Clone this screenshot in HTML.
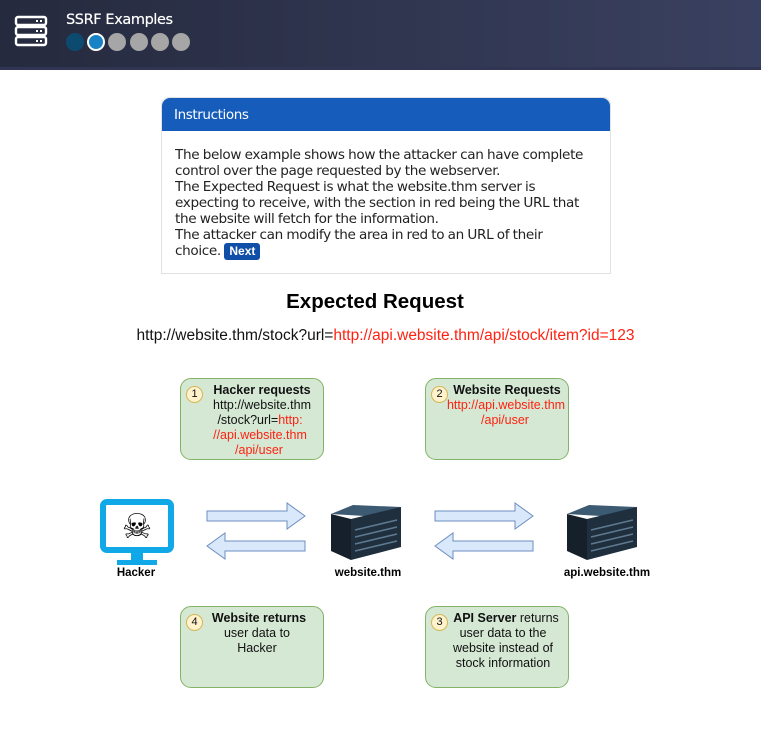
<!DOCTYPE html>
<html><head><meta charset="utf-8"><style>
*{margin:0;padding:0;box-sizing:border-box}
body{width:761px;height:740px;background:#fff;position:relative;overflow:hidden;font-family:"Liberation Sans",sans-serif}
.hdr{position:absolute;left:0;top:0;width:761px;height:70px;background:linear-gradient(90deg,#252a3e,#3a4160);border-bottom:3px solid #2f3552}
.ttl{position:absolute;left:66px;top:12px;color:#fff;font-size:14.5px;font-family:"DejaVu Sans","Liberation Sans",sans-serif;letter-spacing:-0.4px;font-weight:500;text-shadow:0 0 0.5px #fff}
.dot{position:absolute;top:33px;width:18px;height:18px;border-radius:50%;background:#a6a6a6}
.card{position:absolute;left:161px;top:97px;width:450px;height:177px;border:1px solid #e2e2e2;border-radius:8px 8px 0 0}
.ch{height:33px;background:#165dbb;border-radius:8px 8px 0 0;color:#fff;font-size:13.5px;padding:9px 12px;font-family:"DejaVu Sans",sans-serif;letter-spacing:-0.4px}
.cb{padding:16px 0 0 13px;font-size:13.6px;line-height:16px;color:#222;font-family:"DejaVu Sans",sans-serif;letter-spacing:-0.35px;word-spacing:-0.5px}
.nx{display:inline-block;background:#0f4fa8;color:#fff;font-family:"Liberation Sans",sans-serif;font-weight:bold;font-size:12px;padding:1px 5px;border-radius:3px;letter-spacing:0;word-spacing:0;line-height:15px}
.box{position:absolute;width:144px;height:82px;background:#d5e8d4;border:1px solid #82b366;border-radius:11px;font-size:12.5px;color:#111;text-align:center;line-height:15px;padding-top:4px}
.num{position:absolute;left:5px;top:7px;width:17px;height:17px;border-radius:50%;background:#fff2cc;border:1px solid #d6b656;font-size:11px;line-height:15px;text-align:center}
.r{color:#f21}
.lbl{position:absolute;font-size:11.5px;font-weight:bold;color:#000;text-align:center}
</style></head><body>
<div class="hdr">
<svg style="position:absolute;left:14px;top:15px" width="34" height="32" viewBox="0 0 34 32" fill="none" stroke="#fff" stroke-width="2.4"><rect x="2" y="2" width="30" height="8" rx="2"/><rect x="2" y="12" width="30" height="8" rx="2"/><rect x="2" y="22" width="30" height="8" rx="2"/><g stroke-width="2"><path d="M22 6h2M26 6h2M22 16h2M26 16h2M22 26h2M26 26h2"/></g></svg>
<div class="ttl">SSRF Examples</div>
<div class="dot" style="left:66px;background:#0d4a70"></div>
<div class="dot" style="left:87px;background:#1782c4;border:2px solid #fff"></div>
<div class="dot" style="left:108px"></div><div class="dot" style="left:130px"></div><div class="dot" style="left:151px"></div><div class="dot" style="left:172px"></div>
</div>
<div class="card"><div class="ch">Instructions</div>
<div class="cb">The below example shows how the attacker can have complete<br>control over the page requested by the webserver.<br>The Expected Request is what the website.thm server is<br>expecting to receive, with the section in red being the URL that<br>the website will fetch for the information.<br>The attacker can modify the area in red to an URL of their<br>choice. <span class="nx">Next</span></div></div>
<div style="position:absolute;left:0;width:750px;top:290px;text-align:center;font-size:20.5px;font-weight:bold">Expected Request</div>
<div style="position:absolute;left:0;width:771px;top:327px;text-align:center;font-size:15.5px;color:#111">http://website.thm/stock?url=<span class="r">http://api.website.thm/api/stock/item?id=123</span></div>

<div class="box" style="left:180px;top:378px"><div class="num">1</div><b style="padding-left:20px">Hacker requests</b><br><span style="padding-left:20px">http://website.thm</span><br><span style="padding-left:16px">/stock?url=<span class="r">http:</span></span><br><span class="r" style="padding-left:16px">//api.website.thm</span><br><span class="r" style="padding-left:14px">/api/user</span></div>
<div class="box" style="left:425px;top:378px"><div class="num">2</div><b style="padding-left:20px">Website Requests</b><br><span class="r" style="padding-left:18px">http://api.website.thm</span><br><span class="r" style="padding-left:16px">/api/user</span></div>
<div class="box" style="left:180px;top:606px"><div class="num">4</div><b style="padding-left:14px">Website returns</b><br><span style="padding-left:10px">user data to</span><br><span style="padding-left:10px">Hacker</span></div>
<div class="box" style="left:425px;top:606px"><div class="num">3</div><span style="padding-left:18px"><b>API Server</b> returns</span><br><span style="padding-left:12px">user data to the</span><br><span style="padding-left:12px">website instead of</span><br><span style="padding-left:12px">stock information</span></div>

<svg style="position:absolute;left:0;top:490px" width="761" height="90">
<g fill="#dae8fc" stroke="#6c8ebf" stroke-width="1">
<path d="M207 21h80v-8l18 13-18 13v-8h-80z"/>
<path d="M305 51h-80v-8l-18 13 18 13v-8h80z"/>
<path d="M435 21h80v-8l18 13-18 13v-8h-80z"/>
<path d="M533 51h-80v-8l-18 13 18 13v-8h80z"/>
</g>
<rect x="103" y="12" width="68" height="48" rx="4" fill="#fff" stroke="#10a8e6" stroke-width="6"/>
<path d="M131 60h12v10h-12z M117 70h40v5h-40z" fill="#10a8e6"/>
<text x="137" y="48" font-size="34" text-anchor="middle" fill="#000" font-family="DejaVu Sans">☠</text>
<g id="s">
<path d="M331 24l22-9 48 2-20 10z" fill="#3d5a73"/>
<path d="M331 24l20 5v41l-20-9z" fill="#15202b"/>
<path d="M351 29l50-12v40l-50 13z" fill="#1f2f3e"/>
<path d="M355 40l42-10M355 47l42-10M355 54l42-10M355 61l42-10" stroke="#5f7a90" stroke-width="1.5"/>
</g>
<use href="#s" x="236" y="0"/>
</svg>
<div class="lbl" style="left:96px;width:80px;top:567px">Hacker</div>
<div class="lbl" style="left:318px;width:100px;top:567px">website.thm</div>
<div class="lbl" style="left:548px;width:118px;top:567px">api.website.thm</div>
</body></html>
